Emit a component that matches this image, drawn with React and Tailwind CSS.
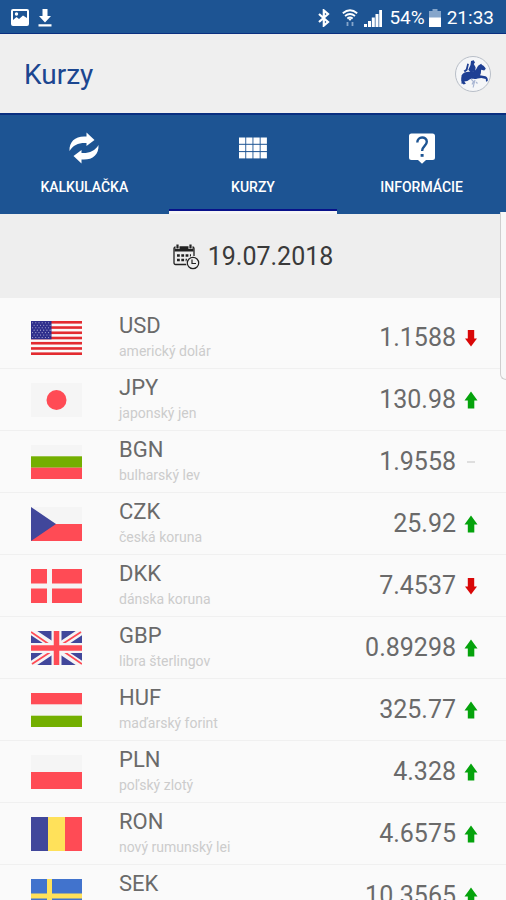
import React, { useState } from 'react'

const rates = [
  { code: 'USD', name: 'americký dolár', value: '1.1588', trend: 'down' },
  { code: 'JPY', name: 'japonský jen', value: '130.98', trend: 'up' },
  { code: 'BGN', name: 'bulharský lev', value: '1.9558', trend: 'same' },
  { code: 'CZK', name: 'česká koruna', value: '25.92', trend: 'up' },
  { code: 'DKK', name: 'dánska koruna', value: '7.4537', trend: 'down' },
  { code: 'GBP', name: 'libra šterlingov', value: '0.89298', trend: 'up' },
  { code: 'HUF', name: 'maďarský forint', value: '325.77', trend: 'up' },
  { code: 'PLN', name: 'poľský zlotý', value: '4.328', trend: 'up' },
  { code: 'RON', name: 'nový rumunský lei', value: '4.6575', trend: 'up' },
  { code: 'SEK', name: '', value: '10.3565', trend: 'up' },
]

const RED = '#ff4b55'
const BLUE = '#41479b'
const GREEN = '#73af00'
const WHITE = '#f5f5f5'

// all flags are drawn on a 51x34 canvas
const flags = {
  USD: (
    <>
      <rect width="51" height="34" fill="#fafafa" />
      {[0, 1, 2, 3, 4, 5, 6].map(i => (
        <rect key={i} y={i * 5.23} width="51" height="2.62" fill="#e32b30" />
      ))}
      <rect width="20.5" height="18.3" fill="#2f2f8c" />
      {[0, 1, 2, 3, 4, 5, 6].map(r =>
        [0, 1, 2, 3, 4, 5].map(c => (
          <circle key={`${r}-${c}`} cx={1.6 + c * 3.2 + (r % 2) * 1.5} cy={1.8 + r * 2.45} r="0.55" fill="#b9b9dc" />
        ))
      )}
    </>
  ),
  JPY: (
    <>
      <rect width="51" height="34" fill={WHITE} />
      <circle cx="25.5" cy="17" r="10" fill={RED} />
    </>
  ),
  BGN: (
    <>
      <rect width="51" height="34" fill={WHITE} />
      <rect y="11.3" width="51" height="11.4" fill={GREEN} />
      <rect y="22.7" width="51" height="11.3" fill={RED} />
    </>
  ),
  CZK: (
    <>
      <rect width="51" height="34" fill={WHITE} />
      <rect y="17" width="51" height="17" fill={RED} />
      <path d="M0 0 L25 17 L0 34z" fill={BLUE} />
    </>
  ),
  DKK: (
    <>
      <rect width="51" height="34" fill={RED} />
      <path d="M16 0h5v14.4h30v5H21V34h-5V19.4H0v-5h16z" fill={WHITE} />
    </>
  ),
  GBP: (
    <>
      <rect width="51" height="34" fill={BLUE} />
      <path d="M0 0L51 34M51 0L0 34" stroke={WHITE} strokeWidth="7" />
      <path d="M0 1L22 16M51 33L29 18M50 1L30 14M1 33L21 20" stroke={RED} strokeWidth="1.8" />
      <path d="M25.5 0v34M0 17h51" stroke={WHITE} strokeWidth="10" />
      <path d="M25.5 0v34M0 17h51" stroke={RED} strokeWidth="5.5" />
    </>
  ),
  HUF: (
    <>
      <rect width="51" height="34" fill={WHITE} />
      <rect width="51" height="11.3" fill={RED} />
      <rect y="22.7" width="51" height="11.3" fill={GREEN} />
    </>
  ),
  PLN: (
    <>
      <rect width="51" height="34" fill={WHITE} />
      <rect y="17" width="51" height="17" fill={RED} />
    </>
  ),
  RON: (
    <>
      <rect width="17" height="34" fill={BLUE} />
      <rect x="17" width="17" height="34" fill="#ffe15a" />
      <rect x="34" width="17" height="34" fill={RED} />
    </>
  ),
  SEK: (
    <>
      <rect width="51" height="34" fill="#4173cd" />
      <path d="M16 0h5v14.4h30v5H21V34h-5V19.4H0v-5h16z" fill="#ffe15a" />
    </>
  ),
}

function Flag({ code }) {
  return (
    <svg viewBox="0 0 51 34" className="w-[51px] h-[34px] shrink-0" aria-hidden="true">
      {flags[code]}
    </svg>
  )
}

function Trend({ trend }) {
  return (
    <svg viewBox="0 0 14 18" className="w-[14px] h-[18px] shrink-0" aria-hidden="true">
      {trend === 'up' && <path d="M7 0.5L13.5 9.5H10.3V17.5H3.8V9.5H0.5z" fill="#05a30c" />}
      {trend === 'down' && <path d="M7 17.5L13 9.5H10.2V1H3.8V9.5H1z" fill="#d90707" />}
      {trend === 'same' && <path d="M3 9h8" stroke="#cccccc" strokeWidth="1.2" />}
    </svg>
  )
}

function StatusBar() {
  return (
    <div className="h-[34px] shrink-0 flex items-center justify-between pl-[11px] pr-3 pt-[2px] bg-[#1d5493] border-b border-[#0a2f80] text-white">
      <div className="flex items-center gap-[9px]">
        <svg viewBox="0 0 18 17" className="w-[18px] h-[17px]">
          <path fillRule="evenodd" fill="#fff" d="M2 0h14a2 2 0 0 1 2 2v13a2 2 0 0 1-2 2H2a2 2 0 0 1-2-2V2a2 2 0 0 1 2-2zM2 2v9l3.500-3 2.500 2 4-3.500 4 2.500V2z" />
          <circle cx="5.500" cy="5" r="1.700" fill="#fff" />
        </svg>
        <svg viewBox="0 0 14 18" className="w-[14px] h-[18px]" fill="#fff">
          <path d="M4.500 0h5v7H13L7 13.500 1 7h3.500zM0.500 15.300h13v2.300h-13z" />
        </svg>
      </div>
      <div className="flex items-center">
        <svg viewBox="0 0 12 18" className="w-3 h-[18px] mr-3" fill="none" stroke="#fff" strokeWidth="2.200">
          <path d="M1 5l9 8-4.200 3.600V1.400L10 5l-9 8" />
        </svg>
        <svg viewBox="0 0 16 18" className="w-4 h-[18px] mr-[6px]" fill="none" stroke="#fff" strokeWidth="1.800">
          <path d="M0.800 4.200Q8-1.800 15.200 4.200M3 7Q8 3 13 7M5.300 9.500Q8 7.500 10.700 9.500" />
          <path d="M6 9.500h4L8 12z" fill="#fff" stroke="none" />
          <path d="M5.500 13v4M10.500 13v4" stroke="#86a6cb" />
        </svg>
        <svg viewBox="0 0 18 18" className="w-[18px] h-[18px] mr-[7px]" fill="#fff">
          <path d="M0 15h3v3H0zM4 12h3v6H4zM7.800 8.500h3V18h-3zM11.500 5h3v13h-3zM15.200 1H18v17h-2.800z" />
        </svg>
        <span className="text-[19px] leading-6 mr-1">54%</span>
        <svg viewBox="0 0 12 18" className="w-3 h-[18px] mr-[6px]">
          <path d="M3.500 0h5v2H12v7H0V2h3.500z" fill="#86a6cb" />
          <path d="M0 8.500h12V18H0z" fill="#fff" />
        </svg>
        <span className="text-[19px] leading-6">21:33</span>
      </div>
    </div>
  )
}

function Emblem() {
  return (
    <svg viewBox="0 0 38 38" className="w-[38px] h-[38px]" aria-hidden="true">
      <circle cx="19" cy="19" r="17.500" fill="#f5f6f8" stroke="#b9bfc8" strokeWidth="1" />
      <g fill="#1e3f94">
        <path d="M7.500 20.500c1.500-2.800 4.500-3.800 8-3.700 3.200.2 5-.3 6.500-2.300 1.200-1.800 1.500-3.500 3.200-4.500l2-1.300.8 1.300c1.800.5 2.800 2 3.800 3.800l-1.600 1.600-3-.6c-.6 2.200.3 3.400-1.200 5.500l5.500 1c1.900.9 2.700 2.500 2.200 4.800l-1.700.6-.2-2.700-4.400-.9-3.800.3c-3 1.200-5.400-.2-7.600.9l-2.700 1.800-3 .3 1.600 2.400-2.500.8-2-4z" />
        <path d="M17 6l2.700-.8 1.300 2.200-1.200 1.500 1.800 3.300-.4 4.300-4.700.8-2.200-2.600 2.200-4.700z" />
        <path d="M13.300 8.500l1.600.4-1.400 6.300-2.500 2-1.400-1.400 2.200-1.600z" />
        <path d="M7.500 22.500l2.500-1-1 4 1 3-2.500.3z" />
      </g>
      <path d="M17 24l2.500 2.500-1.500 3M21 25l-1 3.500-.8 4M22 27l1.500 1.500" fill="none" stroke="#a9b6d3" strokeWidth="1.200" />
    </svg>
  )
}

const ARROW = 'M0.500 19C0 9 7 3.500 17.500 4.500V0.500L25.500 8 17.500 14V11C10 10.500 4 13 0.500 19z'

function ExchangeIcon() {
  return (
    <svg viewBox="0 0 30 32" className="w-[30px] h-8" fill="#fff" aria-hidden="true">
      <path d={ARROW} />
      <path d={ARROW} transform="rotate(180 15 16)" />
    </svg>
  )
}

function GridIcon() {
  return (
    <svg viewBox="0 0 28 32" className="w-7 h-8" fill="#fff" aria-hidden="true">
      {[0, 1, 2].map(r =>
        [0, 1, 2, 3].map(c => <rect key={`${r}-${c}`} x={c * 7.2} y={5.5 + r * 7.3} width="6.3" height="6.3" />)
      )}
    </svg>
  )
}

function HelpIcon() {
  return (
    <svg viewBox="0 0 28 32" className="w-7 h-8" aria-hidden="true">
      <path d="M3.500 1.500h21a2.500 2.500 0 0 1 2.500 2.500v21.500a2.500 2.500 0 0 1-2.500 2.500H18l-4 3.800-4-3.800H3.500A2.500 2.500 0 0 1 1 25.500V4a2.500 2.500 0 0 1 2.500-2.500z" fill="#fff" />
      <path d="M9.300 10.500c0-6.500 9.500-6.500 9.500-.7 0 4-4.700 4.200-4.700 9.200" fill="none" stroke="#1d5493" strokeWidth="2.400" />
      <rect x="12.600" y="22" width="3" height="2.800" fill="#1d5493" />
    </svg>
  )
}

function CalendarIcon() {
  return (
    <svg viewBox="0 0 27 26" className="w-[27px] h-[26px]" fill="none" stroke="#222" aria-hidden="true">
      <path d="M14 20.500H2.500A1.500 1.500 0 0 1 1 19V4.500A1.500 1.500 0 0 1 2.500 3h17A1.500 1.500 0 0 1 21 4.500V12" strokeWidth="1.300" />
      <path d="M1.500 3h19v4.500h-19z" fill="#222" stroke="none" />
      <path d="M4.500 0v5M17.500 0v5" stroke="#eee" strokeWidth="4" />
      <path d="M4.500 0.500v4M17.500 0.500v4" strokeWidth="2.200" />
      <path d="M4 11.500h14M4 16h10" strokeWidth="2.600" strokeDasharray="2.800 1.500" />
      <circle cx="20" cy="19" r="7" fill="#eee" stroke="none" />
      <circle cx="20" cy="19" r="5.700" strokeWidth="1.200" />
      <path d="M19 15.500v4h4" strokeWidth="1.200" />
    </svg>
  )
}

const tabs = [
  { id: 'calc', label: 'KALKULAČKA', Icon: ExchangeIcon },
  { id: 'rates', label: 'KURZY', Icon: GridIcon },
  { id: 'info', label: 'INFORMÁCIE', Icon: HelpIcon },
]

export default function App() {
  const [active, setActive] = useState('rates')

  return (
    <div className="relative h-screen flex flex-col overflow-hidden bg-[#fafafa] font-['Roboto',sans-serif]">
      <StatusBar />

      <header className="h-[79px] shrink-0 flex items-center justify-between pl-6 pr-[14px] bg-[#efefef]">
        <h1 className="pt-[2px] text-[28px] leading-8 text-[#1b4690]">Kurzy</h1>
        <Emblem />
      </header>

      <nav className="shrink-0 grid grid-cols-3 bg-[#1d5493] border-t-2 border-[#0a2f80]">
        {tabs.map(({ id, label, Icon }) => (
          <button
            key={id}
            onClick={() => setActive(id)}
            className={`flex flex-col items-center h-[99px] pt-[17px] border-b-3 ${active === id ? 'border-[#f5f5f5] shadow-[inset_0_-2px_0_#08118a]' : 'border-[#1d5493]'}`}
          >
            <Icon />
            <span className="mt-[13px] text-[14px] leading-5 font-medium text-white">{label}</span>
          </button>
        ))}
      </nav>

      <button className="h-[84px] pt-[2px] shrink-0 flex items-center justify-center gap-2 bg-[#eeeeee]">
        <CalendarIcon />
        <span className="text-[25px] leading-8 text-[#3a3a3a]">19.07.2018</span>
      </button>

      <ul className="pt-[9px] flex-1 overflow-hidden">
        {rates.map(r => (
          <li key={r.code} className="h-[62px] flex items-center pl-[31px] pr-7 border-b border-[#f0f0f0]">
            <Flag code={r.code} />
            <div className="ml-[37px] flex-1">
              <div className="text-[22px] leading-[26px] text-[#6a6a6a]">{r.code}</div>
              <div className="min-h-6 text-[14px] leading-6 text-[#cccccc]">{r.name}</div>
            </div>
            <span className="pt-px text-[25px] leading-8 text-[#6a6a6a]">{r.value}</span>
            <span className="ml-2"><Trend trend={r.trend} /></span>
          </li>
        ))}
      </ul>

      {/* edge panel handle */}
      <div className="absolute right-0 top-[212px] w-[6px] h-[168px] bg-[#f8f8f8] border-l border-b border-[#cfcfcf] rounded-bl-md" />
    </div>
  )
}
